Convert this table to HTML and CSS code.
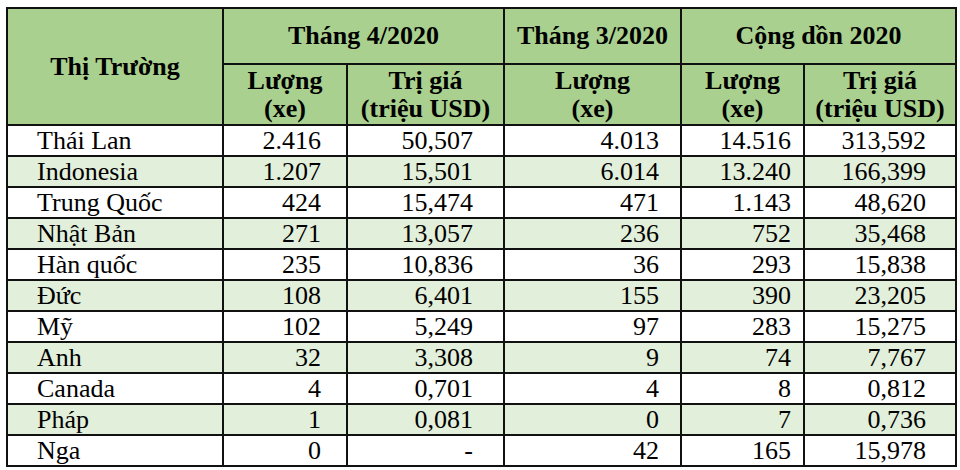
FILE: index.html
```html
<!DOCTYPE html>
<html lang="vi">
<head>
<meta charset="utf-8">
<link rel="stylesheet" href="styles.css">
</head>
<body>
<div class="wrap">
<table class="trade">
<colgroup>
<col class="c1"><col class="c2"><col class="c3"><col class="c4"><col class="c5"><col class="c6">
</colgroup>
<thead>
<tr class="h1">
<th rowspan="2">Thị Trường</th>
<th colspan="2">Tháng 4/2020</th>
<th>Tháng 3/2020</th>
<th colspan="2">Cộng dồn 2020</th>
</tr>
<tr class="h2">
<th>Lượng<br>(xe)</th>
<th>Trị giá<br>(triệu USD)</th>
<th>Lượng<br>(xe)</th>
<th>Lượng<br>(xe)</th>
<th>Trị giá<br>(triệu USD)</th>
</tr>
</thead>
<tbody>
<tr><td>Thái Lan</td><td>2.416</td><td>50,507</td><td>4.013</td><td>14.516</td><td>313,592</td></tr>
<tr><td>Indonesia</td><td>1.207</td><td>15,501</td><td>6.014</td><td>13.240</td><td>166,399</td></tr>
<tr><td>Trung Quốc</td><td>424</td><td>15,474</td><td>471</td><td>1.143</td><td>48,620</td></tr>
<tr><td>Nhật Bản</td><td>271</td><td>13,057</td><td>236</td><td>752</td><td>35,468</td></tr>
<tr><td>Hàn quốc</td><td>235</td><td>10,836</td><td>36</td><td>293</td><td>15,838</td></tr>
<tr><td>Đức</td><td>108</td><td>6,401</td><td>155</td><td>390</td><td>23,205</td></tr>
<tr><td>Mỹ</td><td>102</td><td>5,249</td><td>97</td><td>283</td><td>15,275</td></tr>
<tr><td>Anh</td><td>32</td><td>3,308</td><td>9</td><td>74</td><td>7,767</td></tr>
<tr><td>Canada</td><td>4</td><td>0,701</td><td>4</td><td>8</td><td>0,812</td></tr>
<tr><td>Pháp</td><td>1</td><td>0,081</td><td>0</td><td>7</td><td>0,736</td></tr>
<tr><td>Nga</td><td>0</td><td>-</td><td>42</td><td>165</td><td>15,978</td></tr>
</tbody>
</table>
</div>
</body>
</html>
```
FILE: styles.css
```css
body {
  margin: 0;
  background: #fff;
}
.wrap {
  padding: 7px 0 0 6px;
}
.trade {
  border-collapse: collapse;
  table-layout: fixed;
  width: 949px;
  font-family: "Liberation Serif", Tinos, "Times New Roman", serif;
  font-size: 26px;
  color: #000;
}
.c1 { width: 216px; }
.c2 { width: 124px; }
.c3 { width: 157px; }
.c4 { width: 177px; }
.c5 { width: 123px; }
.c6 { width: 152px; }
.trade th,
.trade td {
  border: 2px solid #111;
  padding: 0;
}
.trade th {
  background: #a9d08e;
  font-weight: bold;
  line-height: 28px;
  text-align: center;
  vertical-align: middle;
}
.h1 { height: 56px; }
.h2 { height: 61px; }
.trade tbody tr { height: 31px; }
.trade td {
  line-height: 26px;
  text-align: right;
  white-space: nowrap;
}
.trade tbody tr:nth-child(even) td { background: #e2efda; }
.trade td:nth-child(1) { text-align: left; padding-left: 29px; }
.trade td:nth-child(2) { padding-right: 25px; }
.trade td:nth-child(3) { padding-right: 30px; }
.trade td:nth-child(4) { padding-right: 21px; }
.trade td:nth-child(5) { padding-right: 12px; }
.trade td:nth-child(6) { padding-right: 29px; }
```
